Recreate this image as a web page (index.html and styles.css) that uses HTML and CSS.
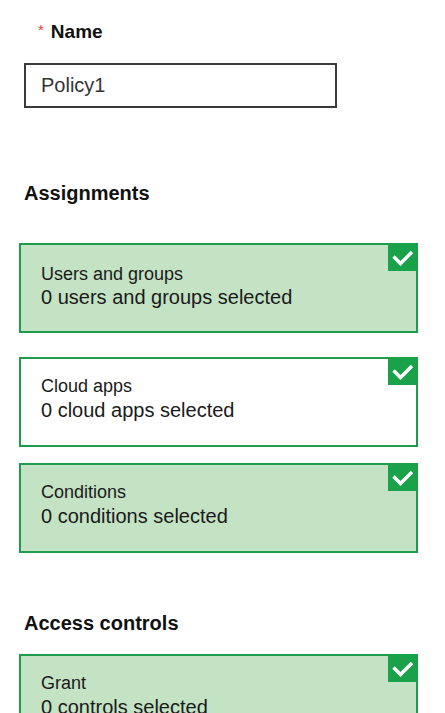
FILE: index.html
```html
<!DOCTYPE html>
<html lang="en">
<head>
<meta charset="utf-8">
<title>Policy</title>
<link rel="stylesheet" href="styles.css">
</head>
<body>
<main class="page">
  <div class="field-label"><span class="req">*</span><span class="label-text">Name</span></div>
  <div class="text-input">Policy1</div>

  <h2 class="section-title section-assign">Assignments</h2>

  <div class="card card-on card-first">
    <div class="card-title">Users and groups</div>
    <div class="card-value">0 users and groups selected</div>
    <span class="check"><svg width="30" height="28" viewBox="0 0 30 28"><path d="M5.5 13.5 L12.5 20.5 L24 9" fill="none" stroke="#fff" stroke-width="3.4"/></svg></span>
  </div>

  <div class="card card-off card-second">
    <div class="card-title">Cloud apps</div>
    <div class="card-value">0 cloud apps selected</div>
    <span class="check"><svg width="30" height="28" viewBox="0 0 30 28"><path d="M5.5 13.5 L12.5 20.5 L24 9" fill="none" stroke="#fff" stroke-width="3.4"/></svg></span>
  </div>

  <div class="card card-on card-third">
    <div class="card-title">Conditions</div>
    <div class="card-value">0 conditions selected</div>
    <span class="check"><svg width="30" height="28" viewBox="0 0 30 28"><path d="M5.5 13.5 L12.5 20.5 L24 9" fill="none" stroke="#fff" stroke-width="3.4"/></svg></span>
  </div>

  <h2 class="section-title section-access">Access controls</h2>

  <div class="card card-on card-grant">
    <div class="card-title">Grant</div>
    <div class="card-value">0 controls selected</div>
    <span class="check"><svg width="30" height="28" viewBox="0 0 30 28"><path d="M5.5 13.5 L12.5 20.5 L24 9" fill="none" stroke="#fff" stroke-width="3.4"/></svg></span>
  </div>
</main>
</body>
</html>
```
FILE: styles.css
```css
html, body {
  margin: 0;
  padding: 0;
  background: #ffffff;
  overflow: hidden;
}

body {
  font-family: "Liberation Sans", Arial, sans-serif;
  color: #111;
}

.page {
  padding: 21px 0 0 19px;
  display: flex;
  flex-direction: column;
  align-items: flex-start;
}

.field-label {
  margin-left: 19px;
  display: flex;
  align-items: flex-start;
  line-height: 22px;
}

.req {
  color: #e03a3a;
  font-size: 15px;
  line-height: 15px;
  margin-top: 1px;
  margin-right: 7px;
}

.label-text {
  font-size: 19px;
  font-weight: bold;
  color: #111;
}

.text-input {
  margin: 20px 0 0 5px;
  box-sizing: border-box;
  width: 313px;
  height: 45px;
  border: 2px solid #3a3a3a;
  padding: 0 0 0 15px;
  display: flex;
  align-items: center;
  font-size: 20px;
  color: #333;
}

.section-title {
  margin: 0 0 0 5px;
  font-size: 20px;
  font-weight: bold;
  line-height: 23px;
  color: #111;
}

.section-assign {
  margin-top: 74px;
}

.section-access {
  margin-top: 59px;
}

.card {
  position: relative;
  box-sizing: border-box;
  width: 399px;
  height: 90px;
  border: 2px solid #1e9b4b;
  padding: 18px 40px 0 20px;
  flex-shrink: 0;
}

.card-on {
  background: #c4e2c4;
}

.card-off {
  background: #ffffff;
}

.card-first {
  margin-top: 38px;
  padding-top: 20px;
}

.card-first .card-value {
  line-height: 26px;
}

.card-second {
  margin-top: 24px;
}

.card-third {
  margin-top: 16px;
}

.card-grant {
  margin-top: 19px;
}

.card-title {
  font-size: 18px;
  line-height: 19px;
  color: #1a1a1a;
}

.card-value {
  font-size: 20px;
  line-height: 28px;
  color: #1a1a1a;
}

.check {
  position: absolute;
  top: -2px;
  right: -2px;
  width: 30px;
  height: 28px;
  background: #1aa24b;
  display: block;
}

.check svg {
  display: block;
}
```
